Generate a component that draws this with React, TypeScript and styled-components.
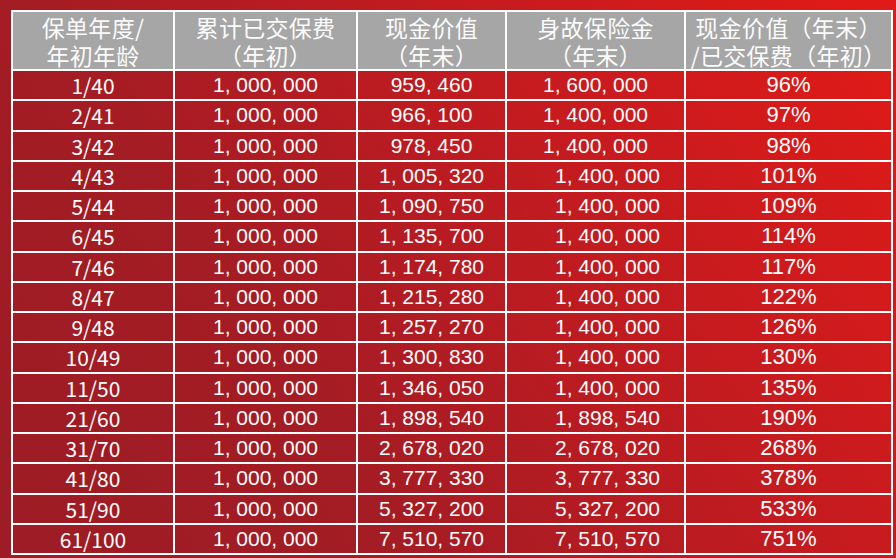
import React from "react";
import styled, { createGlobalStyle } from "styled-components";

const Global = createGlobalStyle`
  html, body { margin: 0; padding: 0; }
  body { width: 896px; height: 558px; overflow: hidden; }
`;

const Page = styled.div`
  width: 896px;
  height: 558px;
  box-sizing: border-box;
  padding: 10px 0 0 11px;
  background: linear-gradient(55deg, #9d1c25 0%, #a41c24 32%, #c31b20 64%, #e21a17 100%);
`;

const Table = styled.table`
  border-collapse: collapse;
  table-layout: fixed;
  width: 880px;
  color: #ffffff;
`;

const HeadCell = styled.th`
  background: #a6a6a6;
  border: 2px solid #ffffff;
  height: 57px;
  padding: 0;
  font-family: "Noto Sans CJK SC", "Noto Sans", sans-serif;
  font-weight: 400;
  font-size: 23px;
  text-align: center;
  vertical-align: middle;
  color: #fbfbfb;
  white-space: nowrap;
  letter-spacing: 0.3px;
`;

const HeadLine = styled.span`
  display: block;
  height: 28px;
  line-height: 28px;
  overflow: visible;
`;

const Cell = styled.td<{ $font: "cjk" | "num" | "pct"; $shift?: number }>`
  border: 2px solid #ffffff;
  height: 28.25px;
  padding: 0 0 0 ${(p) => (p.$shift ? p.$shift * 2 : 0)}px;
  text-align: center;
  vertical-align: middle;
  white-space: nowrap;
  line-height: 26px;
  font-family: ${(p) =>
    p.$font === "cjk"
      ? `"Noto Sans CJK SC", "Noto Sans", sans-serif`
      : p.$font === "pct"
      ? `"Liberation Sans Narrow", "Liberation Sans", sans-serif`
      : `"Liberation Sans", Arial, sans-serif`};
  font-size: ${(p) => (p.$font === "pct" ? 22 : 21)}px;
`;

const cols = [162, 183, 149, 179, 207];

const rows: [string, string, string, string, string][] = [
  ["1/40", "1,000,000", "959,460", "1,600,000", "96%"],
  ["2/41", "1,000,000", "966,100", "1,400,000", "97%"],
  ["3/42", "1,000,000", "978,450", "1,400,000", "98%"],
  ["4/43", "1,000,000", "1,005,320", "1,400,000", "101%"],
  ["5/44", "1,000,000", "1,090,750", "1,400,000", "109%"],
  ["6/45", "1,000,000", "1,135,700", "1,400,000", "114%"],
  ["7/46", "1,000,000", "1,174,780", "1,400,000", "117%"],
  ["8/47", "1,000,000", "1,215,280", "1,400,000", "122%"],
  ["9/48", "1,000,000", "1,257,270", "1,400,000", "126%"],
  ["10/49", "1,000,000", "1,300,830", "1,400,000", "130%"],
  ["11/50", "1,000,000", "1,346,050", "1,400,000", "135%"],
  ["21/60", "1,000,000", "1,898,540", "1,898,540", "190%"],
  ["31/70", "1,000,000", "2,678,020", "2,678,020", "268%"],
  ["41/80", "1,000,000", "3,777,330", "3,777,330", "378%"],
  ["51/90", "1,000,000", "5,327,200", "5,327,200", "533%"],
  ["61/100", "1,000,000", "7,510,570", "7,510,570", "751%"],
];

const headers: [string, string][] = [
  ["保单年度/", "年初年龄"],
  ["累计已交保费", "（年初）"],
  ["现金价值", "（年末）"],
  ["身故保险金", "（年末）"],
  ["现金价值（年末）", "/已交保费（年初）"],
];

const spaced = (s: string) => s.replace(/,/g, ", ");

export default function App() {
  return (
    <>
      <Global />
      <Page>
        <Table>
          <colgroup>
            {cols.map((w, i) => (
              <col key={i} style={{ width: w }} />
            ))}
          </colgroup>
          <thead>
            <tr>
              {headers.map(([a, b]) => (
                <HeadCell key={a + b}>
                  <HeadLine>{a}</HeadLine>
                  <HeadLine>{b}</HeadLine>
                </HeadCell>
              ))}
            </tr>
          </thead>
          <tbody>
            {rows.map((r, i) => (
              <tr key={r[0]}>
                <Cell $font="cjk">{r[0]}</Cell>
                <Cell $font="num">{spaced(r[1])}</Cell>
                <Cell $font="num">{spaced(r[2])}</Cell>
                <Cell $font="num" $shift={i >= 3 ? 12 : 0}>{spaced(r[3])}</Cell>
                <Cell $font="pct">{r[4]}</Cell>
              </tr>
            ))}
          </tbody>
        </Table>
      </Page>
    </>
  );
}
